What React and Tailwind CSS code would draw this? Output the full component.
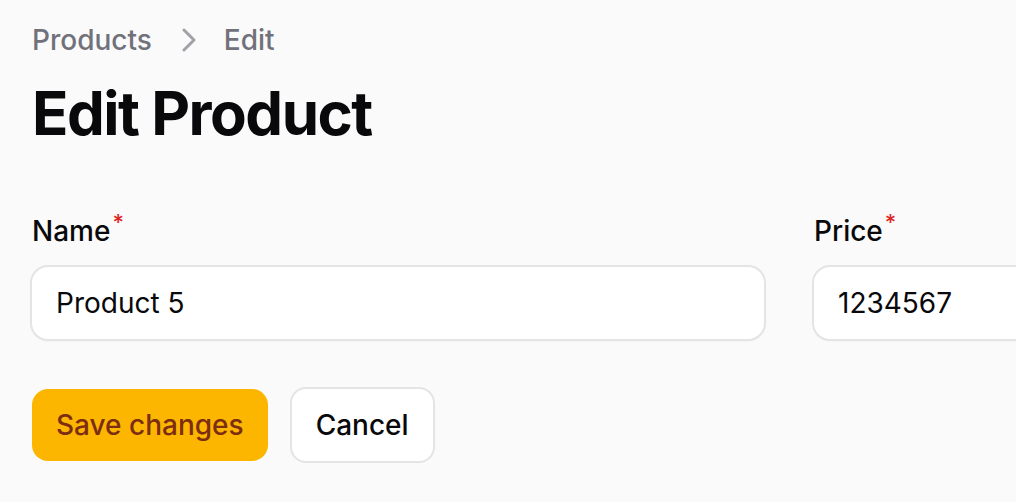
export default function App() {
  return (
    <div className="min-h-screen overflow-hidden bg-[#fafafa] px-8 pt-[22px] font-['Inter',sans-serif] text-[#09090b]">
      <nav className="flex items-center gap-[28px] text-[28px] font-medium leading-[36px] text-[#71717a]">
        <span>Products</span>
        <svg width="16" height="26" viewBox="0 0 16 26" fill="none" className="text-[#a1a1aa]">
          <path d="M4 3l10 10-10 10" stroke="currentColor" strokeWidth="3" strokeLinecap="round" strokeLinejoin="round" />
        </svg>
        <span>Edit</span>
      </nav>

      <h1 className="mt-[19px] text-[60px] font-bold leading-[72px] tracking-tight">Edit Product</h1>

      <div className="mt-[62px] grid w-[1514px] grid-cols-2 gap-[50px]">
        {[
          ['Name', 'Product 5'],
          ['Price', '1234567'],
        ].map(([label, value]) => (
          <div key={label}>
            <label className="block text-[28px] font-medium leading-[40px]">
              {label}
              <sup className="ml-[2px] text-[22px] font-medium text-[#dc2626]">*</sup>
            </label>
            <div className="mt-[16px] flex h-[72px] items-center rounded-[16px] bg-white px-[24px] text-[28px] shadow-[0_1px_3px_rgba(0,0,0,0.12)] ring-2 ring-[#e4e4e7]">
              {value}
            </div>
          </div>
        ))}
      </div>

      <div className="mt-[50px] flex gap-[22px]">
        <button className="h-[72px] rounded-[16px] bg-[#fdb600] px-[24px] text-[28px] font-medium text-[#7c2d12]">
          Save changes
        </button>
        <button className="h-[76px] -mt-[2px] rounded-[16px] border-2 border-[#e4e4e7] bg-white px-[24px] text-[28px] font-medium text-[#09090b]">
          Cancel
        </button>
      </div>
    </div>
  );
}
